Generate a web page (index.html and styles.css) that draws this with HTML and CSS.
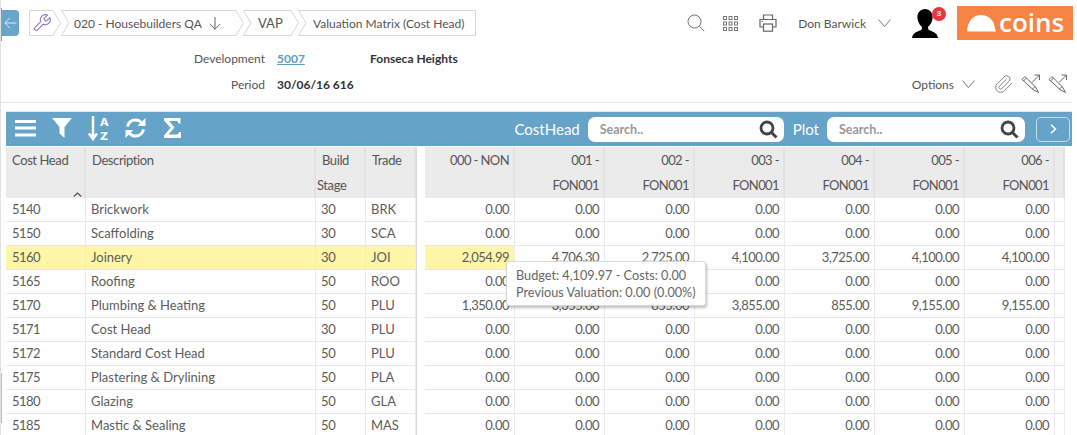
FILE: index.html
```html
<!DOCTYPE html>
<html lang="en">
<head>
<meta charset="utf-8">
<title>Valuation Matrix (Cost Head)</title>
<link rel="stylesheet" href="styles.css">
</head>
<body>
<div class="page">
  <div class="edge-mark"></div>
  <div class="edge-blue"></div>
  <header class="topbar">
    <button class="back" aria-label="Back"><svg width="13" height="12" viewBox="0 0 13 12"><path d="M12.5 6H1M6 .8 .9 6 6 11.2" fill="none" stroke="#dbe9f2" stroke-width="1"/></svg></button>
    <nav class="crumbs">
      <div class="crumb crumb-tool">
        <svg class="crumb-bg" width="33" height="26" viewBox="0 0 33 26"><path d="M.5.5H24L31.5 13 24 25.5H.5z"/></svg>
        <svg class="wrench" width="20" height="20" viewBox="0 0 24 24"><path d="M14.7 6.3a1 1 0 0 0 0 1.4l1.6 1.6a1 1 0 0 0 1.4 0l3.77-3.77a6 6 0 0 1-7.94 7.94l-6.91 6.91a2.12 2.12 0 0 1-3-3l6.91-6.91a6 6 0 0 1 7.94-7.94l-3.76 3.76z" fill="none" stroke="#8e78c4" stroke-width="1.3"/></svg>
      </div>
      <div class="crumb crumb-house">
        <svg class="crumb-bg" width="184" height="26" viewBox="0 0 184 26"><path d="M.5.5H175L182.500 13 175 25.500H.5L8 13z"/></svg>
        <span>020 - Housebuilders QA</span>
        <svg class="down" width="12" height="13" viewBox="0 0 12 13"><path d="M6 0V12.200M.8 7 6 12.200 11.200 7" fill="none" stroke="#666" stroke-width="1"/></svg>
      </div>
      <div class="crumb crumb-vap">
        <svg class="crumb-bg" width="56" height="26" viewBox="0 0 56 26"><path d="M.5.5H48L55.500 13 48 25.500H.5L8 13z"/></svg>
        <span>VAP</span>
      </div>
      <div class="crumb crumb-matrix">
        <svg class="crumb-bg" width="178" height="26" viewBox="0 0 178 26"><path d="M.5.5H177.500V25.500H.5L8 13z"/></svg>
        <span>Valuation Matrix (Cost Head)</span>
      </div>
    </nav>
    <div class="tools">
      <svg class="tool-search" width="18" height="18" viewBox="0 0 18 18"><circle cx="7.500" cy="7.500" r="6.500" fill="none" stroke="#777" stroke-width="1"/><path d="M12.300 12.300 17.200 17.200" stroke="#777" stroke-width="1"/></svg>
      <svg class="tool-grid" width="15" height="15" viewBox="0 0 15 15" fill="none" stroke="#777"><rect x=".5" y=".5" width="3" height="3"/><rect x="6" y=".5" width="3" height="3"/><rect x="11.500" y=".5" width="3" height="3"/><rect x=".5" y="6" width="3" height="3"/><rect x="6" y="6" width="3" height="3"/><rect x="11.500" y="6" width="3" height="3"/><rect x=".5" y="11.500" width="3" height="3"/><rect x="6" y="11.500" width="3" height="3"/><rect x="11.500" y="11.500" width="3" height="3"/></svg>
      <svg class="tool-print" width="18" height="18" viewBox="0 0 18 18" fill="none" stroke="#666" stroke-width="1.200"><path d="M4.500 5V1h9v4M4.500 13H1V5.500h16V13h-3.500"/><rect x="4.500" y="10" width="9" height="7.200"/><path d="M2.500 7.500h1.500"/></svg>
      <span class="user">Don Barwick</span>
      <svg class="chev-user" width="13" height="8" viewBox="0 0 13 8"><path d="M.5.5 6.500 7.500 12.500.5" fill="none" stroke="#777"/></svg>
      <div class="person">
        <svg width="26" height="29" viewBox="0 0 26 29"><path d="M13 0c4.600 0 7.800 3.600 7.600 8.500-.2 3.800-1.900 7.400-4.400 9.300-.4 1.600-.1 2.800 1.300 3.500 3.700 1.700 7.700 2.500 8.500 7.700H0c.8-5.200 4.800-6 8.500-7.700 1.400-.7 1.700-1.900 1.300-3.500C7.300 15.900 5.600 12.300 5.400 8.500 5.200 3.600 8.400 0 13 0z" fill="#000"/></svg>
        <span class="badge">3</span>
      </div>
      <div class="logo">
        <svg width="29" height="17" viewBox="0 0 29 17"><path d="M0 16.500C.3 6 6.500 0 14 0c7.500 0 13.500 5.500 13.800 13l1.200 3.500z" fill="#fff"/></svg>
        <span class="logo-text">coins</span>
      </div>
    </div>
  </header>

  <section class="info">
    <div class="info-row">
      <span class="info-label">Development</span>
      <a class="info-link" href="#">5007</a>
      <span class="info-name">Fonseca Heights</span>
    </div>
    <div class="info-row">
      <span class="info-label">Period</span>
      <span class="info-value">30/06/16 616</span>
      <div class="options">
        <span class="options-label">Options</span>
        <svg width="13" height="8" viewBox="0 0 13 8"><path d="M.5.5 6.500 7.500 12.500.5" fill="none" stroke="#777"/></svg>
        <svg class="clip" width="20" height="20" viewBox="0 0 24 24"><path d="M21.440 11.050l-9.190 9.190a6 6 0 0 1-8.490-8.490l8.570-8.570A4 4 0 1 1 18 8.840l-8.590 8.570a2 2 0 0 1-2.830-2.830l8.490-8.480" fill="none" stroke="#888" stroke-width="1.200"/></svg>
        <svg class="pen" width="20" height="20" viewBox="0 0 20 20" fill="none" stroke="#666"><path d="M1 5.500 4 2.500 14.500 13 17.500 18.500 12 15.500zM2.500 7 5.500 4M11.500 15 14 12.500"/><path d="M11 8.500 18.500 1M13.500 1h5v5"/></svg>
        <svg class="pen" width="20" height="20" viewBox="0 0 20 20" fill="none" stroke="#666"><path d="M1 5.500 4 2.500 14.500 13 17.500 18.500 12 15.500zM2.500 7 5.500 4M11.500 15 14 12.500"/><path d="M11 8.500 18.500 1M13.500 1h5v5"/></svg>
      </div>
    </div>
  </section>

  <main class="panel">
    <div class="toolbar">
      <svg class="tb-icon tb-menu" width="21" height="17" viewBox="0 0 21 17" fill="#fff"><rect width="21" height="3"/><rect y="6.500" width="21" height="3"/><rect y="13.500" width="21" height="3"/></svg>
      <svg class="tb-icon tb-filter" width="20" height="20" viewBox="0 0 20 20"><path d="M0 0H20L12.500 9V20L7.500 15.500V9z" fill="#fff"/></svg>
      <svg class="tb-icon tb-sort" width="23" height="25" viewBox="0 0 23 25"><path d="M5 0V21M1 17.500 5 23 9 17.500" fill="none" stroke="#fff" stroke-width="2.500"/><text x="12" y="9.500" class="sort-letter">A</text><text x="12" y="24" class="sort-letter">Z</text></svg>
      <svg class="tb-icon tb-sync" width="21" height="20" viewBox="0 0 21 20" fill="none" stroke="#fff" stroke-width="3"><path d="M2.500 8.500C3.500 4.500 6.500 2 10.500 2c2.500 0 4.500 1 6 2.800"/><path d="M18.500 11.500c-1 4-4 6.500-8 6.500-2.500 0-4.500-1-6-2.800"/><path d="M20.500 0v8h-8z" fill="#fff" stroke="none"/><path d="M.5 20v-8h8z" fill="#fff" stroke="none"/></svg>
      <svg class="tb-icon tb-sigma" width="17" height="20" viewBox="0 0 17 20"><path d="M0 0H16.500V5.500H14.500C14.300 3.500 13.500 3 12 3H5L10.500 9.500 4.500 16.500H12.500C14 16.500 14.800 15.500 15 14H17V20H0V17.500L6.500 9.800 0 2.500z" fill="#fff"/></svg>
      <span class="tb-label tb-label-cost">CostHead</span>
      <div class="searchbox searchbox-cost">
        <span class="placeholder">Search..</span>
        <svg width="19" height="19" viewBox="0 0 19 19"><circle cx="8" cy="8" r="6" fill="none" stroke="#444" stroke-width="2.800"/><path d="M12.500 12.500 17.500 17.500" stroke="#444" stroke-width="3"/></svg>
      </div>
      <span class="tb-label tb-label-plot">Plot</span>
      <div class="searchbox searchbox-plot">
        <span class="placeholder">Search..</span>
        <svg width="19" height="19" viewBox="0 0 19 19"><circle cx="8" cy="8" r="6" fill="none" stroke="#444" stroke-width="2.800"/><path d="M12.500 12.500 17.500 17.500" stroke="#444" stroke-width="3"/></svg>
      </div>
      <button class="next" aria-label="Next"><svg width="7" height="10" viewBox="0 0 7 10"><path d="M1 .8 5.500 5 1 9.200" fill="none" stroke="#fff" stroke-width="1.500"/></svg></button>
    </div>
    <div class="tables">
      <table class="grid grid-left">
        <colgroup><col class="c-code"><col class="c-desc"><col class="c-stage"><col class="c-trade"></colgroup>
        <thead><tr>
          <th>Cost Head<svg class="caret" width="9" height="5" viewBox="0 0 9 5"><path d="M.8 4.500 4.500 1 8.200 4.500" fill="none" stroke="#555" stroke-width="1.200"/></svg></th>
          <th>Description</th>
          <th class="th-stage"><span class="indent">Build</span><br>Stage</th>
          <th>Trade</th>
        </tr></thead>
        <tbody>
          <tr><td>5140</td><td>Brickwork</td><td>30</td><td>BRK</td></tr>
          <tr><td>5150</td><td>Scaffolding</td><td>30</td><td>SCA</td></tr>
          <tr class="hl"><td>5160</td><td>Joinery</td><td>30</td><td>JOI</td></tr>
          <tr><td>5165</td><td>Roofing</td><td>50</td><td>ROO</td></tr>
          <tr><td>5170</td><td>Plumbing &amp; Heating</td><td>50</td><td>PLU</td></tr>
          <tr><td>5171</td><td>Cost Head</td><td>30</td><td>PLU</td></tr>
          <tr><td>5172</td><td>Standard Cost Head</td><td>50</td><td>PLU</td></tr>
          <tr><td>5175</td><td>Plastering &amp; Drylining</td><td>50</td><td>PLA</td></tr>
          <tr><td>5180</td><td>Glazing</td><td>50</td><td>GLA</td></tr>
          <tr><td>5185</td><td>Mastic &amp; Sealing</td><td>50</td><td>MAS</td></tr>
        </tbody>
      </table>
      <table class="grid grid-right">
        <colgroup><col class="c-val"><col class="c-val"><col class="c-val"><col class="c-val"><col class="c-val"><col class="c-val"><col class="c-val"><col class="c-end"></colgroup>
        <thead><tr>
          <th>000 - NON</th>
          <th>001 -<br>FON001</th>
          <th>002 -<br>FON001</th>
          <th>003 -<br>FON001</th>
          <th>004 -<br>FON001</th>
          <th>005 -<br>FON001</th>
          <th>006 -<br>FON001</th>
          <th></th>
        </tr></thead>
        <tbody>
          <tr><td>0.00</td><td>0.00</td><td>0.00</td><td>0.00</td><td>0.00</td><td>0.00</td><td>0.00</td><td></td></tr>
          <tr><td>0.00</td><td>0.00</td><td>0.00</td><td>0.00</td><td>0.00</td><td>0.00</td><td>0.00</td><td></td></tr>
          <tr><td class="hl-cell">2,054.99</td><td>4,706.30</td><td>2,725.00</td><td>4,100.00</td><td>3,725.00</td><td>4,100.00</td><td>4,100.00</td><td></td></tr>
          <tr><td>0.00</td><td>0.00</td><td>0.00</td><td>0.00</td><td>0.00</td><td>0.00</td><td>0.00</td><td></td></tr>
          <tr><td>1,350.00</td><td>3,355.00</td><td>855.00</td><td>3,855.00</td><td>855.00</td><td>9,155.00</td><td>9,155.00</td><td></td></tr>
          <tr><td>0.00</td><td>0.00</td><td>0.00</td><td>0.00</td><td>0.00</td><td>0.00</td><td>0.00</td><td></td></tr>
          <tr><td>0.00</td><td>0.00</td><td>0.00</td><td>0.00</td><td>0.00</td><td>0.00</td><td>0.00</td><td></td></tr>
          <tr><td>0.00</td><td>0.00</td><td>0.00</td><td>0.00</td><td>0.00</td><td>0.00</td><td>0.00</td><td></td></tr>
          <tr><td>0.00</td><td>0.00</td><td>0.00</td><td>0.00</td><td>0.00</td><td>0.00</td><td>0.00</td><td></td></tr>
          <tr><td>0.00</td><td>0.00</td><td>0.00</td><td>0.00</td><td>0.00</td><td>0.00</td><td>0.00</td><td></td></tr>
        </tbody>
      </table>
    </div>
    <div class="tooltip">Budget: 4,109.97 - Costs: 0.00<br>Previous Valuation: 0.00 (0.00%)</div>
  </main>
</div>
</body>
</html>
```
FILE: styles.css
```css
* { box-sizing: border-box; }
html, body { margin: 0; padding: 0; background: #fff; overflow: hidden; }
body { font-family: "Lato", "Noto Sans", sans-serif; font-size: 12px; color: #555; }
.page { position: relative; width: 1077px; height: 435px; overflow: hidden; border-left: 1px solid #e2e2e2; }
.edge-mark { position: absolute; left: -1px; top: 373px; width: 2px; height: 50px; background: #bdbdbd; }
.edge-blue { position: absolute; left: -1px; top: 8px; width: 2px; height: 33px; background: #69a5ca; }

.topbar { display: flex; align-items: center; height: 38px; margin-top: 4px; }
.back { display: flex; align-items: center; justify-content: center; width: 18px; height: 26px; padding: 0; border: 0; border-radius: 0 4px 4px 0; background: #69a5ca; }
.crumbs { display: flex; margin-left: 10px; height: 26px; }
.crumb { position: relative; display: flex; align-items: center; height: 26px; }
.crumb > span { position: relative; white-space: nowrap; font-size: 12px; color: #555; }
.crumb-bg { position: absolute; left: 0; top: 0; }
.crumb-bg path { fill: #fff; stroke: #d6d6d6; stroke-width: 1; }
.crumb-tool { width: 32px; }
.wrench { position: relative; margin-left: 3px; }
.crumb-house { width: 182px; padding-left: 13px; }
.down { position: relative; margin-left: 7px; }
.crumb-vap { width: 55px; padding-left: 15px; }
.crumb-vap > span { font-size: 13px; }
.crumb-matrix { width: 178px; padding-left: 15px; }

.tools { display: flex; align-items: center; margin-left: auto; margin-right: 4px; }
.tool-print { margin-left: 21px; }
.tool-grid { margin-left: 18px; }
.user { margin-left: 21px; color: #555; white-space: nowrap; }
.chev-user { margin-left: 12px; }
.person { position: relative; width: 26px; height: 29px; margin-left: 21px; }
.badge { position: absolute; left: 20px; top: -2px; width: 14px; height: 14px; border-radius: 50%; background: #ee3440; color: #fff; font: bold 8px/14px "Liberation Sans", sans-serif; text-align: center; }
.logo { display: flex; align-items: center; width: 116px; height: 34px; margin-left: 19px; padding-left: 10px; background: #f58445; }
.logo-text { margin-left: 3px; font: 600 26px/34px "Open Sans", sans-serif; color: #fff; position: relative; top: -1px; }

.info { height: 58px; margin: 3px 5px 0 0; border-bottom: 1px solid #e4e4e4; }
.info-row { display: flex; align-items: center; height: 26px; }
.info-label { width: 264px; text-align: right; color: #555; }
.info-link { width: 93px; margin-left: 12px; color: #5d9dc6; font-weight: 700; }
.info-name, .info-value { color: #333; font-weight: 700; }
.info-value { margin-left: 12px; }
.options { display: flex; align-items: center; margin-left: auto; margin-right: 4px; }
.options-label { margin-right: 8px; color: #555; }
.clip { margin-left: 19px; }
.pen { margin-left: 7px; }

.panel { position: relative; margin: 8px 5px 0 5px; }
.toolbar { display: flex; align-items: center; height: 35px; background: #66a3c8; border-top: 1px solid #dfe8ee; }
.tb-icon { margin-bottom: 2px; }
.tb-menu { margin-left: 9px; }
.tb-filter { margin-left: 16px; }
.tb-sort { margin-left: 16px; }
.tb-sync { margin-left: 14px; }
.tb-sigma { margin-left: 18px; }
.sort-letter { font: bold 11px "DejaVu Sans", sans-serif; fill: #fff; }
.tb-label { color: #fff; font-size: 15px; white-space: nowrap; margin-bottom: 1px; }
.tb-label-cost { margin-left: auto; }
.tb-label-plot { margin-left: 9px; }
.searchbox { display: flex; align-items: center; justify-content: space-between; height: 25px; padding: 0 6px 0 12px; background: #fff; border-radius: 7px; }
.searchbox-cost { width: 196px; margin-left: 8px; }
.searchbox-plot { width: 198px; margin-left: 8px; }
.placeholder { color: #999; font-size: 12.500px; font-weight: 700; }
.next { display: flex; align-items: center; justify-content: center; width: 34px; height: 25px; margin: 0 2px 0 11px; padding: 0; background: transparent; border: 1px solid #c9deeb; border-radius: 5px; }

.tables { display: flex; gap: 8px; margin-top: 1px; }
.grid { border-collapse: separate; border-spacing: 0; table-layout: fixed; }
.grid-left { width: 411px; border-right: 1px solid #dcdcdc; }
.grid-right { width: 640px; }
.c-code { width: 80px; }
.c-desc { width: 230px; }
.c-stage { width: 50px; }
.c-trade { width: 50px; }
.c-val { width: 90px; }
.c-end { width: 10px; }
.grid th { position: relative; height: 51px; padding: 1px 6px 0; vertical-align: top; font-weight: 400; font-size: 13px; line-height: 25px; letter-spacing: -.4px; color: #555; background: #ebebeb; border-right: 2px solid #e2e2e2; text-align: left; }
.grid th.th-stage { padding-left: 1px; }
.indent { padding-left: 5px; }
.grid td { height: 24px; padding: 0 5px 1px; font-size: 13px; color: #5c5c5c; border-right: 1px solid #ebebeb; border-bottom: 1px solid #e8e8e8; white-space: nowrap; }
.grid-left td:first-child { padding-left: 6px; letter-spacing: -.5px; }
.grid-left td:nth-child(3) { letter-spacing: -.4px; }
.grid-right th, .grid-right td { text-align: right; }
.grid-right th { padding-right: 4px; letter-spacing: -.6px; }
.grid-right td { letter-spacing: -.5px; }
.caret { position: absolute; right: 2px; bottom: 1px; }
.hl td, .hl-cell { background: #fff6a8; }
.tooltip { position: absolute; left: 500px; top: 150px; width: 200px; height: 45px; padding: 5px 9px; font-size: 12.700px; line-height: 17px; color: #666; background: #fff; border: 1px solid #d8d8d8; border-radius: 3px; box-shadow: 1px 2px 3px rgba(0,0,0,.25); white-space: nowrap; }
```
